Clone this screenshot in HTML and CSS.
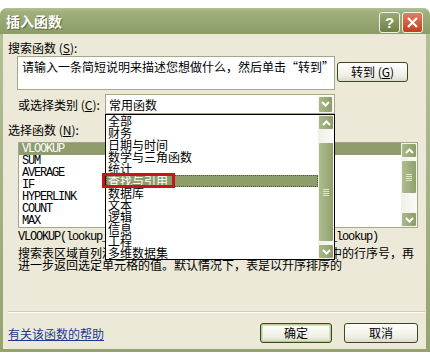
FILE: index.html
```html
<!DOCTYPE html>
<html lang="zh-CN">
<head>
  <meta charset="UTF-8">
  <title>插入函数</title>
  <link rel="stylesheet" href="styles.css">
</head>
<body>
  <div class="window">
    <div class="titlebar">
      <span class="title">插入函数</span>
      <div class="controls">
        <span class="ctl help">?</span>
        <span class="ctl close">
          <svg width="13" height="13" viewBox="0 0 13 13"><path d="M2 2 L11 11 M11 2 L2 11" stroke="#fff" stroke-width="2.2"/></svg>
        </span>
      </div>
    </div>

    <div class="content">
      <div class="lbl-search">搜索函数 (<u>S</u>):</div>
      <div class="search-row">
        <div class="textbox">请输入一条简短说明来描述您想做什么，然后单击“转到”</div>
        <button class="btn btn-go">转到 (<u>G</u>)</button>
      </div>

      <div class="cat-row">
        <span class="cat-label">或选择类别 (<u>C</u>):</span>
        <div class="select">
          <span>常用函数</span>
          <span class="sb-btn drop">
            <svg width="9" height="6" viewBox="0 0 9 6"><path d="M1 1 L4.5 4.5 L8 1" fill="none" stroke="#fff" stroke-width="2"/></svg>
          </span>
        </div>
      </div>

      <div class="lbl-func">选择函数 (<u>N</u>):</div>
      <div class="listbox">
        <ul class="fn-list">
          <li class="sel">VLOOKUP</li>
          <li>SUM</li>
          <li>AVERAGE</li>
          <li>IF</li>
          <li>HYPERLINK</li>
          <li>COUNT</li>
          <li>MAX</li>
        </ul>
        <div class="scrollbar">
          <span class="sb-btn">
            <svg width="9" height="6" viewBox="0 0 9 6"><path d="M1 5 L4.5 1.5 L8 5" fill="none" stroke="#fff" stroke-width="2"/></svg>
          </span>
          <span class="sb-thumb small"><i></i><i></i><i></i><i></i></span>
          <span class="sb-space"></span>
          <span class="sb-btn">
            <svg width="9" height="6" viewBox="0 0 9 6"><path d="M1 1 L4.5 4.5 L8 1" fill="none" stroke="#fff" stroke-width="2"/></svg>
          </span>
        </div>
      </div>

      <div class="desc">
        <div class="syntax">VLOOKUP(lookup_value,table_array,col_index_num,range_lookup)</div>
        <div class="text">搜索表区域首列满足条件的元素，确定待检索单元格在区域中的行序号，再<br>进一步返回选定单元格的值。默认情况下，表是以升序排序的</div>
      </div>

      <div class="separator"></div>

      <div class="bottom-row">
        <a class="help-link" href="#">有关该函数的帮助</a>
        <button class="btn btn-ok">确定</button>
        <button class="btn btn-cancel">取消</button>
      </div>

      <!-- open category dropdown -->
      <div class="dropdown">
        <ul class="cat-list">
          <li>全部</li>
          <li>财务</li>
          <li>日期与时间</li>
          <li>数学与三角函数</li>
          <li>统计</li>
          <li class="sel">查找与引用</li>
          <li>数据库</li>
          <li>文本</li>
          <li>逻辑</li>
          <li>信息</li>
          <li>工程</li>
          <li>多维数据集</li>
        </ul>
        <div class="scrollbar">
          <span class="sb-btn">
            <svg width="9" height="6" viewBox="0 0 9 6"><path d="M1 5 L4.5 1.5 L8 5" fill="none" stroke="#fff" stroke-width="2"/></svg>
          </span>
          <span class="sb-space top"></span>
          <span class="sb-thumb big"><i></i><i></i><i></i><i></i></span>
          <span class="sb-space"></span>
          <span class="sb-btn">
            <svg width="9" height="6" viewBox="0 0 9 6"><path d="M1 1 L4.5 4.5 L8 1" fill="none" stroke="#fff" stroke-width="2"/></svg>
          </span>
        </div>
        <span class="mark"></span>
      </div>
    </div>
  </div>
  <div class="sheet"></div>
</body>
</html>
```

FILE: styles.css
```css
body { margin: 0; background: #fff; font-family: "Liberation Sans", "Noto Sans CJK SC", sans-serif; font-size: 12px; color: #000; width: 430px; height: 356px; overflow: hidden; }
u { text-decoration: underline; }
ul { list-style: none; margin: 0; padding: 0; }

.window { margin-top: 8px; height: 344px; box-sizing: border-box; background: linear-gradient(#b5c398, #94a46f); border-radius: 7px 7px 0 0; padding: 0 4px 3px 3px; display: flex; flex-direction: column; }
.titlebar { height: 26px; display: flex; align-items: center; justify-content: space-between; background: linear-gradient(#b3c295 0, #9fb07c 4px, #8c9c66 100%); border-radius: 7px 7px 0 0; margin: 0 -4px 0 -3px; padding: 0 7px 0 6px; }
.title { color: #fff; font-family: "Noto Sans CJK SC", sans-serif; font-weight: bold; font-size: 14px; text-shadow: 1px 1px 0 #5e6b40; }
.controls { display: flex; gap: 2px; margin-top: 2px; }
.ctl { width: 19px; height: 19px; border: 1px solid #eef2e2; border-radius: 3px; display: flex; align-items: center; justify-content: center; }
.help { background: linear-gradient(#9aaa72, #6f7f48); color: #fff; font-weight: bold; font-size: 15px; font-family: "Liberation Sans", sans-serif; }
.close { background: linear-gradient(#e27e60, #c43e22); }

.content { flex: 1; background: #ece9d8; position: relative; display: flex; flex-direction: column; font-family: "Noto Sans CJK SC", sans-serif; }
.lbl-search { margin-top: 7px; padding-left: 5px; line-height: 14px; white-space: nowrap; }
.search-row { display: flex; margin-top: 1px; align-items: flex-start; }
.textbox { margin-left: 14px; width: 318px; height: 34px; box-sizing: border-box; background: #fff; border: 1px solid #a5a68c; padding: 3px 4px; line-height: 14px; white-space: nowrap; overflow: hidden; }
.btn { font-family: "Noto Sans CJK SC", sans-serif; font-size: 12px; height: 20px; padding: 0; background: linear-gradient(#fff, #f0efe6 70%, #dcdad0); border: 1px solid #3c4a23; border-radius: 3px; color: #000; line-height: 16px; white-space: nowrap; }
.btn-go { margin: 6px 0 0 2px; width: 71px; }

.cat-row { display: flex; align-items: center; margin-top: 4px; height: 20px; }
.cat-label { padding-left: 15px; width: 102px; flex: none; box-sizing: border-box; white-space: nowrap; }
.select { width: 230px; height: 20px; box-sizing: border-box; background: #fff; border: 1px solid #a5a68c; display: flex; align-items: center; justify-content: space-between; padding: 0 1px 0 3px; }

.sb-btn { width: 15px; height: 15px; box-sizing: border-box; border: 1px solid #f4f6ec; border-radius: 2px; background: linear-gradient(90deg, #a9b88a, #8d9d68); display: flex; align-items: center; justify-content: center; flex: none; }
.sb-btn.drop { height: 17px; }

.lbl-func { margin-top: 9px; padding-left: 5px; line-height: 14px; white-space: nowrap; }
.listbox { margin: 5px 0 0 15px; width: 400px; height: 86px; box-sizing: border-box; border: 1px solid #a5a68c; background: #fff; display: flex; }
.fn-list { flex: 1; font-family: "Liberation Mono", monospace; font-size: 12px; letter-spacing: -1.2px; }
.fn-list li { line-height: 12px; height: 12px; padding-left: 3px; }
.fn-list li.sel { background: #8f9c6c; color: #fff; }

.scrollbar { width: 16px; display: flex; flex-direction: column; background: linear-gradient(90deg, #f0efe6, #fbfbf7); }
.scrollbar .sb-btn { width: 16px; }
.sb-space { flex: 1; }
.sb-space.top { flex: none; height: 10px; }
.sb-thumb { width: 16px; box-sizing: border-box; border: 1px solid #f4f6ec; border-radius: 2px; background: linear-gradient(90deg, #aebd8f, #91a16c); display: flex; flex-direction: column; align-items: center; justify-content: center; gap: 1px; flex: none; margin-top: 2px; }
.sb-thumb i { display: block; width: 6px; height: 1px; background: #dfe6cc; }
.sb-thumb.small { height: 34px; }
.sb-thumb.big { height: 100px; }

.desc { margin-top: 3px; padding-left: 15px; }
.syntax { font-family: "Liberation Mono", monospace; font-size: 12px; letter-spacing: -1.2px; line-height: 12px; white-space: nowrap; }
.text { margin-top: 4px; line-height: 12px; white-space: nowrap; }

.separator { margin: 40px 1px 0 5px; border-top: 1px solid #cfccba; border-bottom: 1px solid #fbfaf5; }
.bottom-row { display: flex; align-items: center; margin-top: 10px; padding: 0 8px 0 5px; }
.help-link { color: #1b3a8f; text-decoration: underline; }
.btn-ok { margin-left: auto; width: 72px; border-color: #3c4a23; box-shadow: inset 0 0 0 1px #b6c98e, inset 0 0 0 2px #d6e2b8; }
.btn-cancel { margin-left: 12px; width: 74px; }

.dropdown { position: absolute; left: 102px; top: 80px; width: 230px; height: 146px; box-sizing: border-box; border: 1px solid #000; background: #fff; display: flex; }
.cat-list { flex: 1; }
.cat-list li { height: 12px; line-height: 12px; padding-left: 2px; font-size: 12px; white-space: nowrap; }
.cat-list li.sel { background: #8f9c6c; color: #fff; outline: 1px dotted #4a5530; outline-offset: -1px; }
.dropdown .scrollbar { height: 144px; }
.mark { position: absolute; left: -4px; top: 58px; width: 73px; height: 15px; box-sizing: border-box; border: 3px solid #c4161c; }

.sheet { height: 4px; background: #fff; }
```
